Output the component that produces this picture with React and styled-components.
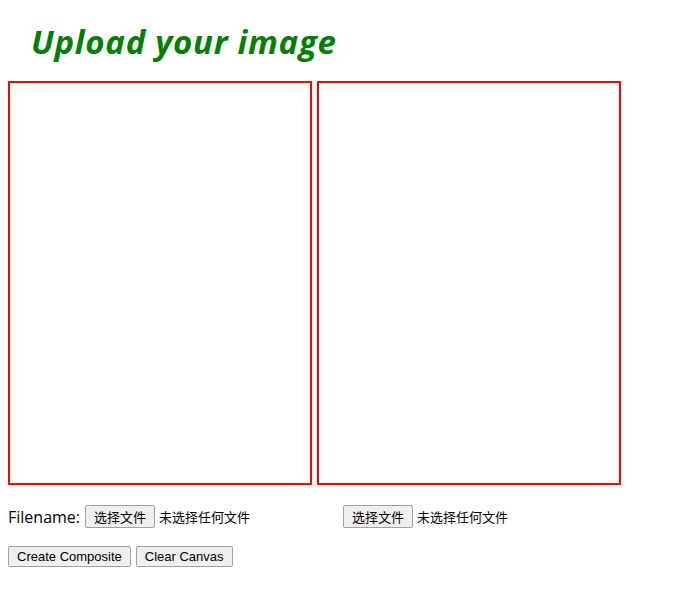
import React from "react";
import styled, {createGlobalStyle} from "styled-components";

// composite page: two canvases, two file pickers, two action buttons

const GlobalStyle = createGlobalStyle`
    body {
        margin: 8px;
        background: #fff;
        font-family: "Open Sans", "Liberation Sans", "Noto Sans CJK SC", sans-serif;
        color: #000;
    }
`

function FilePicker() {
    return (
        <Picker>
            <PickButton type="button">选择文件</PickButton>
            <PickStatus>未选择任何文件</PickStatus>
        </Picker>
    );
}

function App() {
    return (
        <Page>
            <GlobalStyle />
            <Title>Upload your image</Title>

            <CanvasRow>
                <Board width={300} height={400} />
                <Board width={300} height={400} />
            </CanvasRow>

            <FileRow>
                <Label>Filename:</Label>
                <FilePicker />
                <FilePicker />
            </FileRow>

            <ActionRow>
                <Action type="button">Create Composite</Action>
                <Action type="button">Clear Canvas</Action>
            </ActionRow>
        </Page>
    );
}

const Page = styled.div`
    display: flex;
    flex-direction: column;
    align-items: flex-start;
`
const Title = styled.h1`
    margin: 14px 0 19px;
    padding-left: 23px;
    font-family: "Open Sans", sans-serif;
    font-size: 33px;
    line-height: 40px;
    letter-spacing: 0.7px;
    font-style: italic;
    font-weight: 700;
    color: #008000;
`
const CanvasRow = styled.div`
    display: flex;
    gap: 5px;
`
const Board = styled.canvas`
    display: block;
    border: 2px solid #ff0000;
`
const FileRow = styled.div`
    display: flex;
    align-items: center;
    gap: 4px;
    margin-top: 20px;
    height: 23px;
`
const Label = styled.span`
    font-family: "Open Sans", "Liberation Sans", sans-serif;
    font-size: 16px;
    margin-right: 1px;
`
const Picker = styled.span`
    display: inline-flex;
    align-items: center;
    width: 254px;
    gap: 4px;
`
const PickButton = styled.button`
    font-family: "Noto Sans CJK SC", sans-serif;
    font-size: 13px;
    line-height: 19px;
    padding: 1px 6px;
    background: #efefef;
    border: 1px solid #a0a0a0;
    border-radius: 2px;
    color: #000;
    width: 70px;
`
const PickStatus = styled.span`
    font-family: "Noto Sans CJK SC", sans-serif;
    font-size: 13px;
`
const ActionRow = styled.div`
    display: flex;
    gap: 5px;
    margin-top: 18px;
`
const Action = styled.button`
    font-family: "Liberation Sans", Arial, sans-serif;
    font-size: 13px;
    line-height: 15px;
    padding: 2px 8px;
    background: #efefef;
    border: 1px solid #a0a0a0;
    border-radius: 2px;
    color: #000;
`

export default App;
